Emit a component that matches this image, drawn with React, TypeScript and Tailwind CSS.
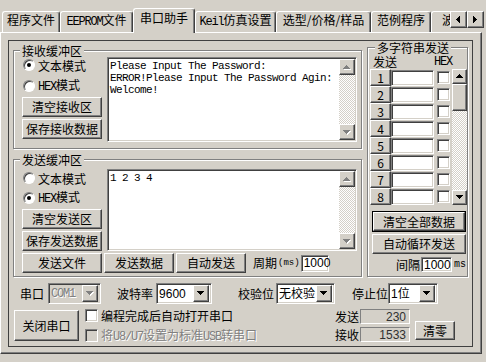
import React from 'react';

const RAISED = 'border border-t-white border-l-white border-r-[#404040] border-b-[#404040] shadow-[inset_-1px_-1px_#808080] bg-[#d4d0c8]';
const SUNKEN = 'border border-t-[#808080] border-l-[#808080] border-r-white border-b-white shadow-[inset_1px_1px_#404040,inset_-1px_-1px_#d4d0c8]';
const ETCHED = 'border border-[#808080] shadow-[inset_1px_1px_#fff,1px_1px_#fff]';
const TRACK = 'bg-[repeating-conic-gradient(#fff_0_25%,#d4d0c8_0_50%)] bg-[length:2px_2px]';
const DISABLED_TEXT = 'text-[#808080] [text-shadow:1px_1px_#fff]';
// latin run in the old bitmap-ish half width
const LAT = "font-['Liberation_Mono',monospace] text-[12px] tracking-[-1.2px]";

type Kids = { className?: string; children?: React.ReactNode };

const Btn: React.FC<Kids> = ({ className = '', children }) => (
  <div className={`${RAISED} flex items-center justify-center shrink-0 ${className}`}>{children}</div>
);

// pixel triangle for scroll / combo arrows
const Tri: React.FC<{ dir: 'up' | 'down' | 'left' | 'right'; grey?: boolean }> = ({ dir, grey }) => {
  const rows = [0, 1, 2, 3];
  const shape = (color: string, dx: number) =>
    rows.map(i => {
      if (dir === 'up' || dir === 'down') {
        const r = dir === 'up' ? i : 3 - i;
        return <rect key={color + i} x={3 - r + dx} y={i + dx} width={2 * r + 1} height={1} fill={color} />;
      }
      const r = dir === 'left' ? i : 3 - i;
      return <rect key={color + i} x={i + dx} y={3 - r + dx} width={1} height={2 * r + 1} fill={color} />;
    });
  const vert = dir === 'up' || dir === 'down';
  return (
    <svg width={vert ? 8 : 5} height={vert ? 5 : 8} className="block" shapeRendering="crispEdges">
      {grey && shape('#fff', 1)}
      {shape(grey ? '#808080' : '#000', 0)}
    </svg>
  );
};

const VScroll: React.FC<{ className?: string; arrow: string; thumb?: string; grey?: boolean }> = ({ className = '', arrow, thumb, grey }) => (
  <div className={`flex flex-col shrink-0 ${TRACK} ${className}`}>
    <Btn className={arrow}><Tri dir="up" grey={grey} /></Btn>
    {thumb && <Btn className={thumb} />}
    <div className="flex-1" />
    <Btn className={arrow}><Tri dir="down" grey={grey} /></Btn>
  </div>
);

const Group: React.FC<Kids & { label: string; labelLeft?: string }> = ({ label, labelLeft = 'left-[6px]', className = '', children }) => (
  <div className={`relative shrink-0 ${ETCHED} ${className}`}>
    <span className={`absolute -top-[7px] ${labelLeft} px-[2px] bg-[#d4d0c8] leading-[13px]`}>{label}</span>
    {children}
  </div>
);

const Radio: React.FC<{ checked?: boolean }> = ({ checked }) => (
  <span className="w-[12px] h-[12px] rounded-full bg-white border border-t-[#808080] border-l-[#808080] border-r-white border-b-white shadow-[inset_1px_1px_#404040] flex items-center justify-center shrink-0">
    {checked && <span className="w-[4px] h-[4px] rounded-full bg-black" />}
  </span>
);

const RadioRow: React.FC<{ checked?: boolean; className?: string; children: React.ReactNode }> = ({ checked, className = '', children }) => (
  <div className={`flex items-center pl-[1px] ${className}`}>
    <Radio checked={checked} />
    <span className="ml-[3px] leading-[13px]">{children}</span>
  </div>
);

const Check: React.FC<{ disabled?: boolean }> = ({ disabled }) => (
  <span className={`block w-[13px] h-[13px] shrink-0 ${SUNKEN} ${disabled ? 'bg-[#d4d0c8]' : 'bg-white'}`} />
);

const TextBox: React.FC<{ className?: string; lines: string[] }> = ({ className = '', lines }) => (
  <div className={`${SUNKEN} bg-white flex shrink-0 p-px ${className}`}>
    <div className="flex-1 pl-[1px] pt-[1px] font-['Liberation_Mono',monospace] text-[11px] tracking-[-0.6px] leading-[12px] whitespace-pre">
      {lines.map(l => <div key={l}>{l}</div>)}
    </div>
    <VScroll className="w-[16px]" arrow="h-[16px]" grey />
  </div>
);

const Field: React.FC<Kids> = ({ className = '', children }) => (
  <div className={`${SUNKEN} bg-white flex items-center pl-[2px] shrink-0 font-['Liberation_Sans',sans-serif] text-[12px] ${className}`}>{children}</div>
);

const Select: React.FC<{ className?: string; value: React.ReactNode; disabled?: boolean }> = ({ className = '', value, disabled }) => (
  <div className={`${SUNKEN} h-[21px] flex items-center pl-[2px] pr-[2px] shrink-0 ${disabled ? 'bg-[#d4d0c8]' : 'bg-white'} ${className}`}>
    <span className={`flex-1 font-['Liberation_Sans','Noto_Sans_CJK_SC',sans-serif] ${disabled ? DISABLED_TEXT : ''}`}>{value}</span>
    <Btn className="w-[16px] h-[17px]"><Tri dir="down" grey={disabled} /></Btn>
  </div>
);

const Counter: React.FC<{ value: string }> = ({ value }) => (
  <div className="ml-[1px] w-[50px] h-[15px] border border-t-[#808080] border-l-[#808080] border-r-white border-b-white flex items-center justify-end pr-[3px] font-['Liberation_Sans',sans-serif] text-[12px] text-[#303030]">
    {value}
  </div>
);

const tabs: { label: React.ReactNode; key: string; w: string; active?: boolean }[] = [
  { key: 'prog', label: '程序文件', w: 'w-[58px]' },
  { key: 'eeprom', label: <><span className={LAT}>EEPROM</span>文件</>, w: 'w-[73px]' },
  { key: 'uart', label: '串口助手', w: 'w-[62px]', active: true },
  { key: 'keil', label: <><span className={LAT}>Keil</span>仿真设置</>, w: 'w-[81px]' },
  { key: 'sel', label: '选型/价格/样品', w: 'w-[95px]' },
  { key: 'demo', label: '范例程序', w: 'w-[60px]' },
  { key: 'wave', label: '波形显示', w: 'w-[70px]' },
];

const App: React.FC = () => {
  return (
    <div className="w-[486px] h-[362px] bg-[#d4d0c8] overflow-hidden font-['Noto_Sans_CJK_SC',sans-serif] text-[12px] leading-[14px] text-black pt-[8px] select-none">
      {/* tab strip */}
      <div className="flex h-[25px] relative z-10">
        <div className="flex items-end w-[450px] overflow-hidden pl-[2px]">
          {tabs.map(t => (
            <div
              key={t.key}
              className={`${t.w} shrink-0 flex items-baseline justify-center rounded-t-[3px] border-t border-l border-r border-t-white border-l-white border-r-[#404040] shadow-[inset_-1px_0_#808080] bg-[#d4d0c8] whitespace-nowrap ${t.active ? 'h-[25px] pt-[2px]' : 'h-[21px] mb-[1px] pt-[1px]'}`}
            >
              {t.label}
            </div>
          ))}
        </div>
        <div className="flex mt-[3px] h-[17px]">
          <Btn className="w-[17px] h-[17px]"><Tri dir="left" /></Btn>
          <Btn className="w-[17px] h-[17px]"><Tri dir="right" /></Btn>
        </div>
      </div>

      {/* tab page */}
      <div className="-mt-px w-[482px] h-[322px] border border-t-white border-l-white border-r-[#404040] border-b-[#404040] shadow-[inset_-1px_-1px_#808080] pl-[7px] pt-[7px]">
        <div className="w-[465px] h-[307px] border border-[#404040]">
          <div className="flex pl-[4px]">
            {/* receive + send buffers */}
            <div className="w-[349px] mt-[9px] flex flex-col">
              <Group label="接收缓冲区" className="h-[99px]">
                <div className="flex pl-[8px] pt-[6px]">
                  <div className="w-[80px] flex flex-col">
                    <RadioRow checked className="h-[16px]">文本模式</RadioRow>
                    <RadioRow className="h-[16px] mt-[5px]"><span className={LAT}>HEX</span>模式</RadioRow>
                    <Btn className="h-[20px] mt-[3px]">清空接收区</Btn>
                    <Btn className="h-[20px] mt-[2px]">保存接收数据</Btn>
                  </div>
                  <TextBox
                    className="ml-[5px] w-[250px] h-[85px]"
                    lines={['Please Input The Password:', 'ERROR!Please Input The Password Agin:', 'Welcome!']}
                  />
                </div>
              </Group>

              <Group label="发送缓冲区" className="h-[118px] mt-[10px]">
                <div className="flex pl-[8px] pt-[9px]">
                  <div className="w-[80px] flex flex-col">
                    <RadioRow className="h-[16px] mt-[1px]">文本模式</RadioRow>
                    <RadioRow checked className="h-[16px] mt-[4px]"><span className={LAT}>HEX</span>模式</RadioRow>
                    <Btn className="h-[20px] mt-[3px]">清空发送区</Btn>
                    <Btn className="h-[20px] mt-[2px]">保存发送数据</Btn>
                  </div>
                  <TextBox className="ml-[5px] w-[250px] h-[82px]" lines={['1 2 3 4']} />
                </div>
                <div className="flex items-center pl-[8px] mt-[2px] h-[20px]">
                  <Btn className="w-[80px] h-[20px]">发送文件</Btn>
                  <Btn className="w-[70px] h-[20px] ml-[2px]">发送数据</Btn>
                  <Btn className="w-[70px] h-[20px] ml-[2px]">自动发送</Btn>
                  <span className="ml-[7px]">周期</span>
                  <span className="text-[9px] ml-[1px] font-['Liberation_Mono',monospace]">(ms)</span>
                  <Field className="w-[28px] h-[17px] ml-[1px]">1000</Field>
                </div>
              </Group>
            </div>

            {/* multi string send */}
            <Group label="多字符串发送" labelLeft="left-[7px]" className="w-[101px] h-[230px] ml-[5px] mt-[6px]">
              <div className="flex items-end h-[15px] mt-[6px] pl-[5px]">
                <span>发送</span>
                <span className={`ml-[37px] ${LAT}`}>HEX</span>
              </div>
              <div className="flex pl-[2px]">
                <div className="flex flex-col">
                  {[1, 2, 3, 4, 5, 6, 7, 8].map(n => (
                    <div key={n} className="flex items-center h-[17px]">
                      <Btn className="w-[21px] h-[17px]">{n}</Btn>
                      <Field className="w-[43px] h-[16px]" />
                      <span className="ml-[3px]"><Check /></span>
                    </div>
                  ))}
                </div>
                <VScroll className="w-[15px] h-[136px] ml-[2px]" arrow="h-[15px]" thumb="h-[27px]" />
              </div>
              <div className="ml-[4px] mt-[6px] w-[94px] h-[21px] border border-black">
                <Btn className="w-full h-full">清空全部数据</Btn>
              </div>
              <Btn className="ml-[4px] mt-[2px] w-[94px] h-[20px]">自动循环发送</Btn>
              <div className="flex items-center justify-end h-[15px] mt-[3px] pr-[1px]">
                <span>间隔</span>
                <Field className="w-[31px] h-[15px] ml-[1px]">1000</Field>
                <span className="ml-[2px] text-[10px] font-['Liberation_Mono',monospace]">ms</span>
              </div>
            </Group>
          </div>

          {/* serial settings */}
          <div className="flex items-center h-[21px] mt-[6px] pl-[11px]">
            <span>串口</span>
            <Select className="w-[53px] ml-[4px]" value={<span className={LAT}>COM1</span>} disabled />
            <span className="ml-[16px]">波特率</span>
            <Select className="w-[56px] ml-[3px]" value="9600" />
            <span className="ml-[26px]">校验位</span>
            <Select className="w-[59px] ml-[2px]" value="无校验" />
            <span className="ml-[17px]">停止位</span>
            <Select className="w-[50px]" value="1位" />
          </div>

          <div className="flex items-start mt-[6px] pl-[5px]">
            <Btn className="w-[65px] h-[31px]">关闭串口</Btn>
            <div className="ml-[6px] w-[250px] flex flex-col -mt-[1px]">
              <div className="flex items-center h-[13px]">
                <Check />
                <span className="ml-[3px]">编程完成后自动打开串口</span>
              </div>
              <div className="flex items-center h-[13px] mt-[7px]">
                <Check disabled />
                <span className={`ml-[3px] ${DISABLED_TEXT}`}>将<span className={LAT}>U8/U7</span>设置为标准<span className={LAT}>USB</span>转串口</span>
              </div>
            </div>
            <div className="flex flex-col -mt-[1px]">
              <div className="flex items-center h-[15px]">
                <span>发送</span>
                <Counter value="230" />
              </div>
              <div className="flex items-center h-[15px] mt-[3px]">
                <span>接收</span>
                <Counter value="1533" />
              </div>
            </div>
            <Btn className="w-[40px] h-[19px] ml-[5px] mt-[11px]">清零</Btn>
          </div>
        </div>
      </div>
    </div>
  );
};

export default App;
